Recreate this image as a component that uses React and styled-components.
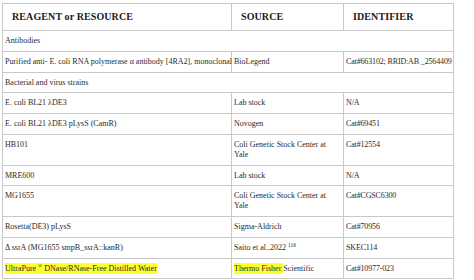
import React from "react";
import styled, { createGlobalStyle } from "styled-components";

const GlobalStyle = createGlobalStyle`
  html, body {
    margin: 0;
    padding: 0;
    background: #ffffff;
  }
`;

const Page = styled.div`
  padding: 3px 0 0 2px;
  font-family: "Liberation Serif", "DejaVu Serif", serif;
  color: #2a2a2a;
`;

const Table = styled.table`
  border-collapse: collapse;
  table-layout: fixed;
  width: 451px;
  border: 1px solid #c9c9c9;
`;

const HeadCell = styled.th`
  border: 1px solid #c9c9c9;
  padding: 7px 8px 7px 9px;
  line-height: 12px;
  font-size: 10px;
  font-weight: bold;
  text-align: left;
  color: #1a1a1a;
  letter-spacing: 0.1px;
`;

const Cell = styled.td`
  border: 1px solid #c9c9c9;
  padding: 5px 2px 5px 2px;
  line-height: 9.8px;
  font-size: 8px;
  vertical-align: top;
  white-space: ${(p) => (p.$nowrap ? "nowrap" : "normal")};
  letter-spacing: ${(p) => (p.$tight ? "-0.15px" : "0")};
  overflow: visible;
`;

const Sup = styled.sup`
  font-size: 5.5px;
  line-height: 0;
  vertical-align: 3px;
`;

const Mark = styled.span`
  background: #ffff2e;
  padding: 1px 0;
`;

const rows = [
  { section: "Antibodies" },
  {
    name: "Purified anti- E. coli RNA polymerase α antibody [4RA2], monoclonal",
    source: "BioLegend",
    id: "Cat#663102; RRID:AB _2564409",
  },
  { section: "Bacterial and virus strains" },
  { name: "E. coli BL21 λDE3", source: "Lab stock", id: "N/A" },
  { name: "E. coli BL21 λDE3 pLysS (CamR)", source: "Novogen", id: "Cat#69451" },
  { name: "HB101", source: "Coli Genetic Stock Center at Yale", id: "Cat#12554" },
  { name: "MRE600", source: "Lab stock", id: "N/A" },
  { name: "MG1655", source: "Coli Genetic Stock Center at Yale", id: "Cat#CGSC6300" },
  { name: "Rosetta(DE3) pLysS", source: "Sigma-Aldrich", id: "Cat#70956" },
  {
    name: "Δ ssrA (MG1655 smpB_ssrA::kanR)",
    source: (
      <>
        Saito et al.,2022 <Sup>116</Sup>
      </>
    ),
    id: "SKEC114",
  },
  {
    name: (
      <Mark>
        UltraPure <Sup>®</Sup> DNase/RNase-Free Distilled Water
      </Mark>
    ),
    source: (
      <>
        <Mark>Thermo Fisher </Mark>Scientific
      </>
    ),
    id: "Cat#10977-023",
  },
];

const App = () => {
  return (
    <>
      <GlobalStyle />
      <Page>
        <Table>
          <colgroup>
            <col style={{ width: 229 }} />
            <col style={{ width: 112 }} />
            <col style={{ width: 110 }} />
          </colgroup>
          <thead>
            <tr>
              <HeadCell>REAGENT or RESOURCE</HeadCell>
              <HeadCell>SOURCE</HeadCell>
              <HeadCell>IDENTIFIER</HeadCell>
            </tr>
          </thead>
          <tbody>
            {rows.map((row, index) =>
              row.section ? (
                <tr key={index}>
                  <Cell colSpan={3}>{row.section}</Cell>
                </tr>
              ) : (
                <tr key={index}>
                  <Cell $nowrap>{row.name}</Cell>
                  <Cell>{row.source}</Cell>
                  <Cell $nowrap $tight>
                    {row.id}
                  </Cell>
                </tr>
              )
            )}
          </tbody>
        </Table>
      </Page>
    </>
  );
};

export default App;
